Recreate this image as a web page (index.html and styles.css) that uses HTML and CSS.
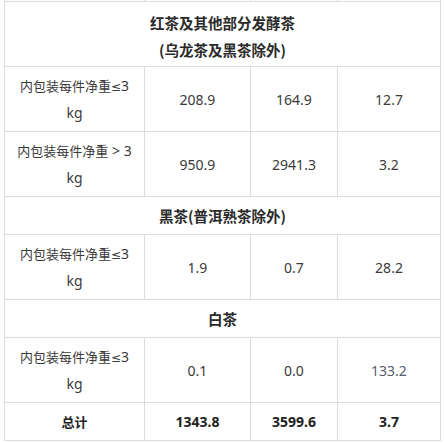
FILE: index.html
```html
<!DOCTYPE html>
<html lang="zh-CN">
<head>
<meta charset="utf-8">
<link rel="stylesheet" href="styles.css">
</head>
<body>
<div class="wrap">
<table class="data">
<colgroup><col class="c1"><col class="c2"><col class="c3"><col class="c4"></colgroup>
<tr class="stub"><td></td><td></td><td></td><td></td></tr>
<tr><td colspan="4" class="sec first">红茶及其他部分发酵茶<br>(乌龙茶及黑茶除外)</td></tr>
<tr><td class="lab">内包装每件净重<span class="le">≤</span><span class="lat">3 kg</span></td><td class="num">208.9</td><td class="num">164.9</td><td class="num">12.7</td></tr>
<tr><td class="lab">内包装每件净重<span class="lat"> &gt; 3 kg</span></td><td class="num">950.9</td><td class="num">2941.3</td><td class="num">3.2</td></tr>
<tr><td colspan="4" class="sec">黑茶(普洱熟茶除外)</td></tr>
<tr><td class="lab">内包装每件净重<span class="le">≤</span><span class="lat">3 kg</span></td><td class="num">1.9</td><td class="num">0.7</td><td class="num">28.2</td></tr>
<tr><td colspan="4" class="sec">白茶</td></tr>
<tr><td class="lab">内包装每件净重<span class="le">≤</span><span class="lat">3 kg</span></td><td class="num">0.1</td><td class="num">0.0</td><td class="num light">133.2</td></tr>
<tr class="total"><td class="lab strong">总计</td><td class="num strong">1343.8</td><td class="num strong">3599.6</td><td class="num strong">3.7</td></tr>
</table>
</div>
</body>
</html>
```
FILE: styles.css
```css
html, body {
  margin: 0;
  padding: 0;
  background: #ffffff;
}
.wrap {
  padding-left: 4px;
}
.data {
  border-collapse: collapse;
  table-layout: fixed;
  width: 436px;
  font-family: "Noto Sans", "Noto Sans CJK SC", sans-serif;
  color: #3a3a3a;
}
.c1 { width: 140px; }
.c2 { width: 106px; }
.c3 { width: 87px; }
.c4 { width: 103px; }
.data td {
  border: 1px solid #dcdcdc;
  padding: 5px 10px;
  text-align: center;
  vertical-align: middle;
  line-height: 27px;
  height: 27px;
}
.stub td {
  border-top: none;
  padding: 0;
  height: 1px;
  line-height: 1px;
}
.sec {
  font-family: "Noto Sans CJK SC", sans-serif;
  font-size: 14.5px;
  font-weight: bold;
  color: #2a2a2a;
}
.data td.first {
  padding-top: 7px;
  padding-bottom: 3px;
}
.lab {
  font-family: "Noto Sans CJK SC", sans-serif;
  font-size: 13px;
}
.le {
  font-family: "DejaVu Sans", sans-serif;
  font-size: 12px;
  line-height: 1;
}
.lat {
  font-family: "Noto Sans", "Noto Sans CJK SC", sans-serif;
  font-size: 14px;
  line-height: 1;
}
.num {
  font-family: "Noto Sans", sans-serif;
  font-size: 14px;
}
.light {
  color: #55606e;
}
.strong {
  font-weight: bold;
  color: #222222;
}
```
